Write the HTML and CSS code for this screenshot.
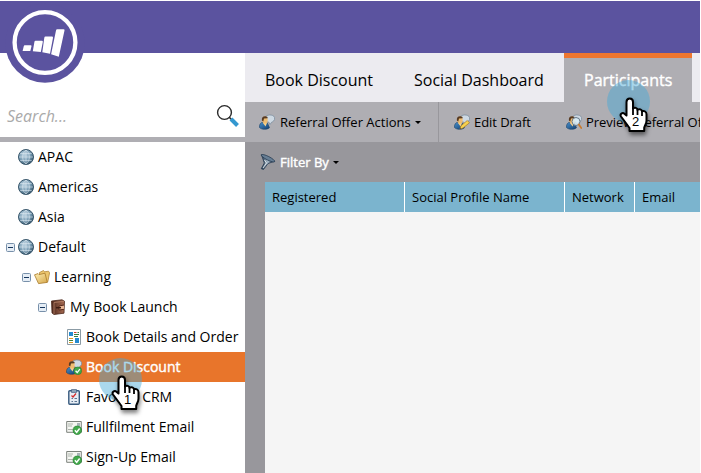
FILE: index.html
```html
<!DOCTYPE html>
<html lang="en">
<head>
<meta charset="utf-8">
<title>Book Discount</title>
<link rel="stylesheet" href="styles.css">
</head>
<body>
<svg class="defs" width="0" height="0" aria-hidden="true">
  <defs>
    <radialGradient id="globeFill" cx=".4" cy=".35" r=".65"><stop offset="0" stop-color="#b9d0df"/><stop offset=".6" stop-color="#7c9fb6"/><stop offset="1" stop-color="#3d5d73"/></radialGradient>
    <linearGradient id="coat" x2="1" y2="1"><stop stop-color="#4a90cb"/><stop offset="1" stop-color="#123f70"/></linearGradient>
    <linearGradient id="gold" x2="1" y2="1"><stop stop-color="#fff0b5"/><stop offset="1" stop-color="#d5a649"/></linearGradient>
    <linearGradient id="leather" x2="1"><stop stop-color="#4e291d"/><stop offset="1" stop-color="#a76b52"/></linearGradient>
    <linearGradient id="steel" x2="1"><stop stop-color="#20344b"/><stop offset=".5" stop-color="#a9bbca"/><stop offset="1" stop-color="#23364a"/></linearGradient>
    <symbol id="globe" viewBox="0 0 16 16"><circle cx="8" cy="8" r="7.500" fill="url(#globeFill)" stroke="#38566b"/><path d="M8 1v14M1 8h14M2.300 4.500h11.400M2.300 11.500h11.400M8 1C3.500 4 3.500 12 8 15M8 1c4.500 3 4.500 11 0 14" fill="none" stroke="#dbe8f0" stroke-width=".6"/></symbol>
    <symbol id="minus" viewBox="0 0 9 9"><rect x=".5" y=".5" width="8" height="8" rx="1" fill="#e5edf5" stroke="#7890aa"/><path d="M2 4.500h5" stroke="#16355c"/></symbol>
    <symbol id="folder" viewBox="0 0 16 16"><path d="M5 12 5.500 3.500 9.500 1.500l1 1.300 4-.6 1.100 1.600-1.800 9z" fill="#ecc66e" stroke="#aa7c2c" stroke-width=".7"/><path d="M.5 5.800 4 4.600l1 1L11 4.200l2.300 9.200L4.500 14.600z" fill="url(#gold)" stroke="#a8792a" stroke-width=".8"/></symbol>
    <symbol id="case" viewBox="0 0 16 16"><path d="M1.500 2 12 .8l2.500 1.400-.5 12L4 15.500l-2-1.500z" fill="url(#leather)" stroke="#4b281d" stroke-width=".8"/><path d="M4 3.500 14 2.300M4 3.500V15" stroke="#c08b70" stroke-width=".7"/><path d="M14 6 9 7v4l5-.7" fill="#e7b492" stroke="#56281b"/><path d="M6 8.700h5" stroke="#3c1c13" stroke-width="1.500"/></symbol>
    <symbol id="layout" viewBox="0 0 16 16"><path d="M1.500.5h13v15h-13z" fill="#fff" stroke="#8b9ba5"/><path d="M3 3h4v4H3zM9 9h4v5H9z" fill="#258bd0"/><path d="M8 3.500h2.500" stroke="#d33c2a"/><path d="M11.500 3.500H13M8 5.500h5M8 7.500h4" stroke="#397f42"/><path d="M3 9.500h4M3 13.500h4" stroke="#d99a22"/><path d="M3 11.500h4" stroke="#38823e"/></symbol>
    <symbol id="checkBadge" viewBox="0 0 8 8"><circle cx="4" cy="4" r="3.700" fill="#42a84b" stroke="#23762e" stroke-width=".5"/><path d="m2 4 1.500 1.700L6 2.500" fill="none" stroke="#fff" stroke-width="1.200"/></symbol>
    <symbol id="person" viewBox="0 0 16 16"><path d="M6 3.300C7 .4 14.500-.1 15.500 3.500c.8 3-2 4.500-2.800 4.600L11 10.500 10 8.300C7 8 5.500 6 6 3.300z" fill="#ced9e3" stroke="#7f91a1" stroke-width=".8"/><path d="M.5 13.500c-.3-3 1-5 3.500-5.300l4.500 1 2 4.500c-2 2-8 2.200-10-.2z" fill="url(#coat)" stroke="#173f68" stroke-width=".6"/><path d="m4 9 2.500 3.500L8 9z" fill="#f7d28c"/><ellipse cx="6" cy="6" rx="2.700" ry="3.600" fill="#efbd71"/><path d="M2.900 6.500C2.500 3.500 4 2 6.500 2.200c1.500 0 2.300.8 2.200 2.100L5 4.500l-.7 3z" fill="#573a22"/></symbol>
    <symbol id="personCheck" viewBox="0 0 16 16"><use href="#person" width="16" height="16"/><use href="#checkBadge" x="7.500" y="7.500" width="8.500" height="8.500"/></symbol>
    <symbol id="personEdit" viewBox="0 0 16 16"><use href="#person" width="16" height="16"/><path d="m6 15 1-3.200 6.300-5.300 2.200 2.300L9 14z" fill="#f7d24f" stroke="#aa7b24" stroke-width=".7"/><path d="m6 15 1-.4-.6-.8z" fill="#333"/></symbol>
    <symbol id="personView" viewBox="0 0 16 16"><use href="#person" width="16" height="16"/><circle cx="10" cy="7.500" r="4" fill="#d9edf8" fill-opacity=".8" stroke="#667887"/><path d="m12.800 10.500 2.500 3.500" stroke="#c87a2d" stroke-width="1.800" stroke-linecap="round"/></symbol>
    <symbol id="survey" viewBox="0 0 16 16"><rect x="2.800" y="1.700" width="10.500" height="13.600" rx="1" fill="#e6edf4" stroke="#36597d" stroke-width="1.400"/><path d="M5.500.5h5v3h-5z" fill="#8ba3b8" stroke="#3b5879" stroke-width=".6"/><path d="m5.500 6.500 1.500 1.500 3-3.500" fill="none" stroke="#d22b2b" stroke-width="1.200"/><path d="M8.500 9.500H11M8.500 12.500H11M5.500 9.500H7M5.500 12.500H7" stroke="#5c7592"/></symbol>
    <symbol id="mail" viewBox="0 0 16 16"><path d="M.7 2.500h14.600v10.800H.7z" fill="#f5f6f2" stroke="#7c827c"/><path d="M2 5h5M2 7h4M2 10.500h5" stroke="#abb3ab"/><path d="M11 4h3v3h-3z" fill="#a9b6b8"/><use href="#checkBadge" x="6.500" y="6.500" width="9.500" height="9.500"/></symbol>
    <symbol id="funnel" viewBox="0 0 16 16"><path d="M1.500.8 14.500 7.300 8 9.500l-4.500 6-2.200-.8L4.300 9z" fill="url(#steel)" stroke="#263a50" stroke-width=".8"/><ellipse cx="8" cy="4.200" rx="7.500" ry="1.800" transform="rotate(27 8 4.200)" fill="#677e94" stroke="#253a51" stroke-width=".7"/><path d="m4.500 6 2 3-3.500 5" fill="none" stroke="#e6edf2" stroke-width=".9"/></symbol>
    <symbol id="hand" viewBox="0 0 29 36"><path d="M7.500 18.500V5C7.500.3 14 .3 14 5v6.500c1.500-1.500 4.300-.7 4.500 1.300 1.800-1.300 4.300-.3 4.500 1.500 2.200-.9 4.500.5 4.500 2.900v6.300c0 3.500-1.700 4.500-2.300 7.300v3.200H10.500V31C8 27.500 5 23.500 2 19.500c-1.500-2.300 1.400-4.600 3.700-2.600z" fill="#fff" stroke="#000" stroke-width="2" stroke-linejoin="round"/><path d="M14 11v7M18.500 12.800V18M23 14.300V19" stroke="#000" stroke-width="1.800"/></symbol>
  </defs>
</svg>
<div class="app">
  <header class="topbar">
    <svg class="logo" viewBox="0 0 80 80"><circle cx="40" cy="40" r="39.700" fill="#5b539f"/><circle cx="40" cy="39.500" r="30.400" fill="none" stroke="#fff" stroke-width="4.300"/><path d="M19.800 42.200h5.800q1.200 0 .9 1l-1.200 4.800h-7.700l1.100-4.600q.2-1.200 1.100-1.200zM30.500 37.700h6.300q1.300 0 1 1.200l-2 10-8-.7 1.600-9.300q.2-1.200 1.100-1.200zM40.500 33.500h6.400q1.300 0 1.100 1.200l-3 16-7.700-1.400 2-14.600q.2-1.200 1.200-1.200zM52.200 26.200h6.300q1.300 0 1 1.300l-5.700 26.200-7.700-2.400 4.900-23.900q.2-1.200 1.200-1.200z" fill="#fff"/></svg>
  </header>
  <div class="workspace">
    <aside class="sidebar">
      <div class="search"><span>Search...</span><svg class="magnifier" viewBox="0 0 24 24"><circle cx="8.500" cy="8.500" r="6.900" fill="#fff" stroke="#292929" stroke-width="1.400"/><path d="m13 13 2.500 2.500" stroke="#292929" stroke-width="1.600"/><path d="m15 15 6.500 6.500" stroke="#3498d0" stroke-width="4"/></svg></div>
      <div class="tree">
        <div class="row level0"><i class="gap"></i><svg class="icon"><use href="#globe"/></svg><span>APAC</span></div>
        <div class="row level0"><i class="gap"></i><svg class="icon"><use href="#globe"/></svg><span>Americas</span></div>
        <div class="row level0"><i class="gap"></i><svg class="icon"><use href="#globe"/></svg><span>Asia</span></div>
        <div class="row level0"><svg class="toggle"><use href="#minus"/></svg><svg class="icon"><use href="#globe"/></svg><span>Default</span></div>
        <div class="row level1"><svg class="toggle"><use href="#minus"/></svg><svg class="icon"><use href="#folder"/></svg><span>Learning</span></div>
        <div class="row level2"><svg class="toggle"><use href="#minus"/></svg><svg class="icon"><use href="#case"/></svg><span>My Book Launch</span></div>
        <div class="row level3"><svg class="icon"><use href="#layout"/></svg><span>Book Details and Order</span></div>
        <div class="row level3 selected"><svg class="icon"><use href="#personCheck"/></svg><span>Book Discount</span></div>
        <div class="row level3"><svg class="icon"><use href="#survey"/></svg><span>Favorite CRM</span></div>
        <div class="row level3"><svg class="icon"><use href="#mail"/></svg><span>Fullfilment Email</span></div>
        <div class="row level3"><svg class="icon"><use href="#mail"/></svg><span>Sign-Up Email</span></div>
      </div>
    </aside>
    <main class="main">
      <nav class="tabs"><span class="tab first">Book Discount</span><span class="tab second">Social Dashboard</span><span class="tab active">Participants</span></nav>
      <div class="toolbar">
        <div class="tool actions"><svg class="icon"><use href="#person"/></svg><span>Referral Offer Actions</span><b class="caret"></b></div>
        <div class="tool edit"><svg class="icon"><use href="#personEdit"/></svg><span>Edit Draft</span></div>
        <div class="tool preview"><svg class="icon"><use href="#personView"/></svg><span>Preview Referral Offer</span></div>
      </div>
      <div class="filter"><svg class="icon"><use href="#funnel"/></svg><span>Filter By</span><b class="caret"></b></div>
      <section class="grid"><div class="columns"><span>Registered</span><span>Social Profile Name</span><span>Network</span><span>Email</span></div></section>
    </main>
  </div>
  <div class="pointer step1"><svg><use href="#hand"/></svg><span>1</span></div>
  <div class="pointer step2"><svg><use href="#hand"/></svg><span>2</span></div>
</div>
</body>
</html>
```
FILE: styles.css
```css
* { box-sizing: border-box; }
body { margin: 0; background: #fff; color: #000; font: 14px "Open Sans", sans-serif; overflow: hidden; }
.defs { position: absolute; }
.app { position: relative; display: flex; flex-direction: column; width: 700px; height: 473px; padding-top: 1px; overflow: hidden; white-space: nowrap; }
.topbar { position: relative; flex: 0 0 52px; background: #5b539f; }
.logo { position: absolute; z-index: 1; left: 4.500px; top: 2px; width: 80px; height: 80px; }
.workspace { display: flex; flex: 1; min-height: 0; }
.sidebar { width: 245px; flex: none; background: #fff; }
.search { display: flex; align-items: flex-end; justify-content: space-between; height: 89px; padding: 0 5px 9px 7px; border-bottom: 5px solid #afaeb3; color: #aaa; font-size: 16px; font-style: italic; line-height: 23px; }
.magnifier { width: 24px; height: 24px; }
.row { display: flex; align-items: center; height: 30px; }
.row span { margin-left: 4px; padding-bottom: 2px; }
.icon { width: 16px; height: 16px; flex: none; }
.toggle { width: 9px; height: 9px; margin-right: 3px; flex: none; }
.gap { width: 12px; }
.level0 { padding-left: 6px; }
.level1 { padding-left: 22px; }
.level2 { padding-left: 38px; }
.level3 { padding-left: 66px; }
.selected { background: #e8752b; color: #fff; -webkit-text-stroke: .4px #fff; }
.main { display: flex; flex: 1; flex-direction: column; min-width: 0; background: #98979c; }
.tabs { display: flex; height: 49px; background: #ecebf0; font-size: 16px; }
.tab { display: flex; align-items: center; flex: none; padding: 4px 0 0 20px; }
.first { width: 149px; }
.second { width: 170px; }
.active { width: 128px; padding: 0 0 1px 20px; border-top: 5px solid #ee762f; background: #afaeb3; color: #fff; -webkit-text-stroke: .4px #fff; }
.toolbar { display: flex; height: 40px; background: #afaeb3; font-size: 13px; }
.tool { display: flex; align-items: center; flex: none; }
.tool span, .filter span { margin-left: 5px; }
.actions { width: 194px; padding-left: 14px; border-right: 1px solid #98979c; }
.edit { width: 112px; padding-left: 15px; }
.edit span, .preview span { margin-left: 4px; letter-spacing: -.05px; }
.preview { padding-left: 15px; }
.caret { margin: 0 0 0 4px; border: 3px solid transparent; border-top: 3px solid #000; border-bottom: 0; }
.filter { display: flex; align-items: center; height: 40px; padding-left: 15px; color: #fff; font-size: 13px; -webkit-text-stroke: .4px #fff; }
.filter span { margin-left: 4px; }
.grid { flex: 1; margin-left: 20px; background: #f5f5f5; }
.columns { display: grid; grid-template-columns: 140px 160px 70px 1fr; height: 30px; background: #7bb4ce; font-size: 13px; line-height: 30px; }
.columns span { padding-left: 7px; border-right: 1px solid #fff; }
.columns span:last-child { border: 0; }
.pointer { position: absolute; width: 43px; height: 60px; }
.pointer::before { content: ""; position: absolute; width: 43px; height: 43px; border-radius: 50%; background: rgba(66, 169, 216, .45); }
.pointer svg { position: absolute; left: 12px; top: 17px; width: 29px; height: 36px; filter: drop-shadow(1px 3px 2px rgba(0, 0, 0, .5)); }
.pointer span { position: absolute; left: 25px; top: 34px; font: 13px "Liberation Sans", sans-serif; }
.step1 { left: 99px; top: 358px; }
.step2 { left: 607px; top: 80px; }
```
